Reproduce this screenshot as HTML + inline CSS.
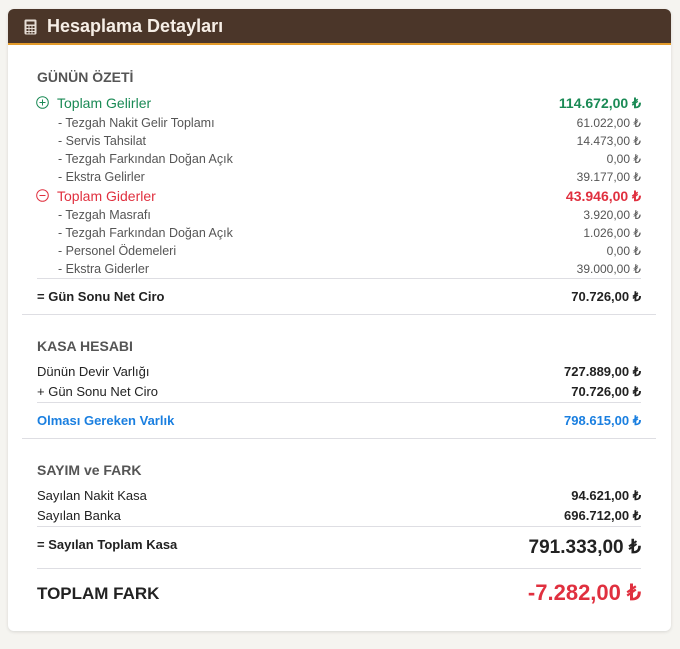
<!DOCTYPE html>
<html><head><meta charset="utf-8"><style>
*{margin:0;padding:0;box-sizing:border-box}
body{width:680px;height:649px;background:#f5f4f0;font-family:"Liberation Sans",sans-serif;position:relative;overflow:hidden}
.card{position:absolute;left:8px;top:9px;width:663px;height:622px;background:#fff;border-radius:6px;box-shadow:0 1px 3px rgba(0,0,0,.12);overflow:hidden}
.hd{position:absolute;left:0;top:0;width:663px;height:36px;background:#4b3629;border-bottom:2px solid #e39b2a}
.hd span{position:absolute;left:39px;top:7px;color:#f6eee6;font-size:18px;font-weight:bold}
.t{position:absolute;white-space:nowrap;line-height:1}
.r{position:absolute;right:30px;white-space:nowrap;line-height:1;text-align:right}
.sec{left:29px;font-size:14px;font-weight:bold;color:#555}
.sub{left:50px;font-size:12.5px;color:#555}
.subv{font-size:12px;color:#555}
.ln{position:absolute;height:1px;background:#dedee3}
</style></head><body>
<div class="card">
<div class="hd"><svg style="position:absolute;left:16px;top:10px" width="13" height="16" viewBox="0 0 13 16"><rect x="0.5" y="0.5" width="12" height="15" rx="1.5" fill="#e6ddd5"/><rect x="2.5" y="2.5" width="8" height="3" fill="#4b3629"/><g fill="#4b3629"><rect x="2.5" y="7" width="2" height="2"/><rect x="5.5" y="7" width="2" height="2"/><rect x="8.5" y="7" width="2" height="2"/><rect x="2.5" y="10" width="2" height="2"/><rect x="5.5" y="10" width="2" height="2"/><rect x="8.5" y="10" width="2" height="2"/><rect x="2.5" y="13" width="2" height="1.5"/><rect x="5.5" y="13" width="2" height="1.5"/><rect x="8.5" y="13" width="2" height="1.5"/></g></svg><span>Hesaplama Detayları</span></div>

<div class="t sec" style="top:61px">GÜNÜN ÖZETİ</div>
<svg style="position:absolute;left:28px;top:87px" width="13" height="13"><circle cx="6.5" cy="6.5" r="5.8" fill="none" stroke="#1a8a55" stroke-width="1"/><path d="M6.5 3.5v6M3.5 6.5h6" stroke="#1a8a55" stroke-width="1"/></svg>
<div class="t" style="left:49px;top:87px;font-size:14px;color:#1a8a55">Toplam Gelirler</div>
<div class="r" style="top:87px;font-size:14px;font-weight:bold;color:#1a8a55">114.672,00 ₺</div>
<div class="t sub" style="top:108px">- Tezgah Nakit Gelir Toplamı</div><div class="r subv" style="top:108px">61.022,00 ₺</div>
<div class="t sub" style="top:126px">- Servis Tahsilat</div><div class="r subv" style="top:126px">14.473,00 ₺</div>
<div class="t sub" style="top:144px">- Tezgah Farkından Doğan Açık</div><div class="r subv" style="top:144px">0,00 ₺</div>
<div class="t sub" style="top:162px">- Ekstra Gelirler</div><div class="r subv" style="top:162px">39.177,00 ₺</div>
<svg style="position:absolute;left:28px;top:180px" width="13" height="13"><circle cx="6.5" cy="6.5" r="5.8" fill="none" stroke="#e0303f" stroke-width="1"/><path d="M3.5 6.5h6" stroke="#e0303f" stroke-width="1"/></svg>
<div class="t" style="left:49px;top:180px;font-size:14px;color:#e0303f">Toplam Giderler</div>
<div class="r" style="top:180px;font-size:14px;font-weight:bold;color:#e0303f">43.946,00 ₺</div>
<div class="t sub" style="top:200px">- Tezgah Masrafı</div><div class="r subv" style="top:200px">3.920,00 ₺</div>
<div class="t sub" style="top:218px">- Tezgah Farkından Doğan Açık</div><div class="r subv" style="top:218px">1.026,00 ₺</div>
<div class="t sub" style="top:236px">- Personel Ödemeleri</div><div class="r subv" style="top:236px">0,00 ₺</div>
<div class="t sub" style="top:254px">- Ekstra Giderler</div><div class="r subv" style="top:254px">39.000,00 ₺</div>
<div class="ln" style="left:29px;width:604px;top:269px"></div>
<div class="t" style="left:29px;top:281px;font-size:13px;font-weight:bold;color:#222">= Gün Sonu Net Ciro</div>
<div class="r" style="top:281px;font-size:13px;font-weight:bold;color:#222">70.726,00 ₺</div>
<div class="ln" style="left:14px;width:634px;top:305px"></div>

<div class="t sec" style="top:330px">KASA HESABI</div>
<div class="t" style="left:29px;top:356px;font-size:13px;color:#222">Dünün Devir Varlığı</div><div class="r" style="top:356px;font-size:13px;font-weight:bold;color:#222">727.889,00 ₺</div>
<div class="t" style="left:29px;top:376px;font-size:13px;color:#222">+ Gün Sonu Net Ciro</div><div class="r" style="top:376px;font-size:13px;font-weight:bold;color:#222">70.726,00 ₺</div>
<div class="ln" style="left:29px;width:604px;top:393px"></div>
<div class="t" style="left:29px;top:405px;font-size:13px;font-weight:bold;color:#1a7fe0">Olması Gereken Varlık</div><div class="r" style="top:405px;font-size:13px;font-weight:bold;color:#1a7fe0">798.615,00 ₺</div>
<div class="ln" style="left:14px;width:634px;top:429px"></div>

<div class="t sec" style="top:454px">SAYIM ve FARK</div>
<div class="t" style="left:29px;top:480px;font-size:13px;color:#222">Sayılan Nakit Kasa</div><div class="r" style="top:480px;font-size:13px;font-weight:bold;color:#222">94.621,00 ₺</div>
<div class="t" style="left:29px;top:500px;font-size:13px;color:#222">Sayılan Banka</div><div class="r" style="top:500px;font-size:13px;font-weight:bold;color:#222">696.712,00 ₺</div>
<div class="ln" style="left:29px;width:604px;top:517px"></div>
<div class="t" style="left:29px;top:529px;font-size:13px;font-weight:bold;color:#222">= Sayılan Toplam Kasa</div>
<div class="r" style="top:529px;font-size:19px;font-weight:bold;color:#222">791.333,00 ₺</div>
<div class="ln" style="left:29px;width:604px;top:559px"></div>
<div class="t" style="left:29px;top:576px;font-size:17px;font-weight:bold;color:#222">TOPLAM FARK</div>
<div class="r" style="top:573px;font-size:22px;font-weight:bold;color:#e0303f">-7.282,00 ₺</div>
</div>
</body></html>
